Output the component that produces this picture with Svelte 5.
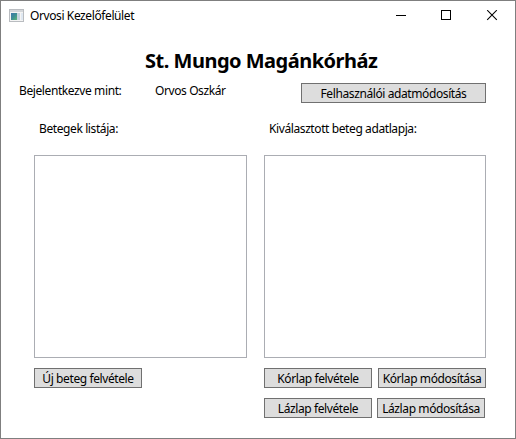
<script>
  const records = [
    ['Kórlap felvétele', 'Kórlap módosítása'],
    ['Lázlap felvétele', 'Lázlap módosítása'],
  ];
</script>

<div class="window">
  <header>
    <svg class="app" width="16" height="14" viewBox="0 0 16 14" shape-rendering="crispEdges">
      <defs>
        <linearGradient id="view" x1="0" y1="0" x2="1" y2="1">
          <stop offset="0" stop-color="#3d78ad" />
          <stop offset="0.5" stop-color="#3d8e94" />
          <stop offset="1" stop-color="#5cb873" />
        </linearGradient>
      </defs>
      <rect x="0.5" y="0.5" width="14" height="12" fill="#f4f4f4" stroke="#b9bcc0" />
      <rect x="1" y="1" width="13" height="2" fill="#d3d6da" />
      <rect x="2" y="4" width="6" height="7" fill="url(#view)" />
      <rect x="8" y="4" width="3" height="7" fill="#c4d3de" />
      <rect x="12" y="4" width="2" height="7" fill="#dfe8f2" />
    </svg>
    <span class="caption">Orvosi Kezelőfelület</span>
    <svg class="controls" width="103" height="12" viewBox="0 0 103 12" fill="none" stroke="#000">
      <path d="M0 5.5h10M45.5 .5h9v9h-9z" shape-rendering="crispEdges" />
      <path d="M91.2 .2l9.6 9.6M100.8 .2l-9.6 9.6" stroke-width="1.1" />
    </svg>
  </header>
  <h1><span>St. Mungo Magánkórház</span></h1>
  <div class="user">
    <span class="label"><span>Bejelentkezve mint:</span></span>
    <span class="name">Orvos Oszkár</span>
    <button class="profile"><span>Felhasználói adatmódosítás</span></button>
  </div>
  <main>
    <section class="patients">
      <h2><span>Betegek listája:</span></h2>
      <div class="list"></div>
      <div class="row"><button><span>Új beteg felvétele</span></button></div>
    </section>
    <section class="details">
      <h2><span>Kiválasztott beteg adatlapja:</span></h2>
      <div class="list"></div>
      {#each records as row}
        <div class="row">
          {#each row as label}<button><span>{label}</span></button>{/each}
        </div>
      {/each}
    </section>
  </main>
</div>

<style>
  .window {
    box-sizing: border-box;
    width: 516px;
    height: 439px;
    border: 1px solid #7f7f7f;
    background: #fff;
    color: #000;
    font: 12px/16px 'Noto Sans', 'Open Sans', sans-serif;
    letter-spacing: -0.4px;
    white-space: nowrap;
    overflow: hidden;
  }
  header {
    display: flex;
    align-items: center;
    height: 29px;
    padding-left: 8px;
  }
  .app { margin-right: 5px; }
  .controls { margin: 0 16px 0 auto; }
  h1 {
    margin: 17px 0 0 144px;
    font-size: 20px;
    line-height: 28px;
    font-weight: 700;
    letter-spacing: -0.5px;
  }
  .user {
    display: flex;
    height: 20px;
    margin: 8px 29px 0 18px;
  }
  .label { width: 136px; }
  .profile { width: 185px; margin-left: auto; }
  button {
    box-sizing: border-box;
    width: 108px;
    height: 20px;
    padding: 1px 0 0;
    border: 1px solid #707070;
    border-radius: 0;
    background: #ddd;
    color: inherit;
    font: inherit;
    letter-spacing: inherit;
    line-height: 16px;
  }
  main {
    display: flex;
    gap: 17px;
    margin: 18px 0 0 33px;
  }
  .patients { width: 213px; }
  .details { width: 222px; }
  h2 {
    height: 34px;
    margin: 0 0 0 5px;
    font: inherit;
  }
  .list {
    box-sizing: border-box;
    height: 203px;
    border: 1px solid #abadb3;
  }
  .row {
    display: flex;
    gap: 6px;
    margin-top: 10px;
  }
  .row + .row { gap: 5px; }
</style>
